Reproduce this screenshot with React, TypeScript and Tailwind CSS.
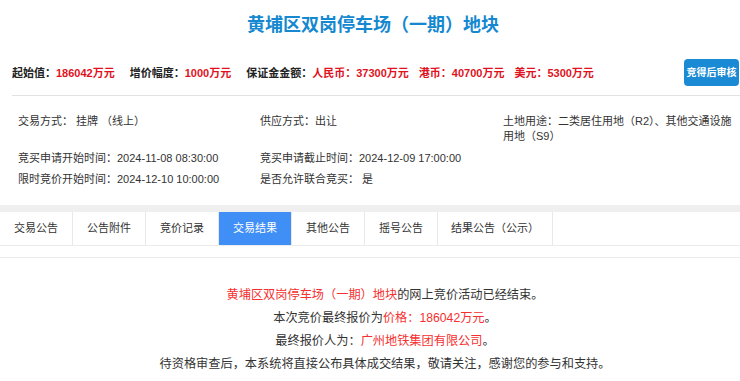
const font = { fontFamily: '"Liberation Sans", "Noto Sans CJK SC", "Noto Sans", sans-serif' };

const tabs = ["交易公告", "公告附件", "竞价记录", "交易结果", "其他公告", "摇号公告", "结果公告（公示）"];

function Field({ label, value }: { label: string; value: string }) {
  return (
    <div className="whitespace-nowrap text-[11px] leading-[14px] text-[#333]">
      {label}
      {value}
    </div>
  );
}

export default function App() {
  return (
    <div className="w-[740px] h-[381px] overflow-hidden bg-white" style={font}>
      <h1 className="pt-[12px] pl-[6px] text-center text-[18px] font-bold leading-[26px] text-[#1588d0]">
        黄埔区双岗停车场（一期）地块
      </h1>

      <div className="mt-[21px] flex items-center justify-between pl-[12px] pr-[1px]">
        <div className="flex items-center gap-[15px] text-[11px] font-bold leading-[16px] text-[#222]">
          <span>
            起始值：<span className="text-[#e0121e]">186042万元</span>
          </span>
          <span>
            增价幅度：<span className="text-[#e0121e]">1000万元</span>
          </span>
          <span className="flex gap-[10px]">
            <span>
              保证金金额：<span className="text-[#e0121e]">人民币：37300万元</span>
            </span>
            <span className="text-[#e0121e]">港币：40700万元</span>
            <span className="text-[#e0121e]">美元：5300万元</span>
          </span>
        </div>
        <button className="h-[27px] w-[55px] rounded-[4px] bg-[#1a8ad4] text-[10px] font-bold text-white">
          竞得后审核
        </button>
      </div>

      <div className="mt-[9px] ml-[12px] border-b border-[#e2e2e2]" />

      <div className="mt-[18px] grid grid-cols-[242px_243px_1fr] gap-y-[7px] pl-[18px]">
        <Field label="交易方式：" value=" 挂牌 （线上）" />
        <Field label="供应方式：" value="出让" />
        <div className="whitespace-nowrap text-[11px] leading-[15px] text-[#333]">
          土地用途：二类居住用地（R2）、其他交通设施
          <br />
          用地（S9）
        </div>
        <Field label="竞买申请开始时间：" value="2024-11-08 08:30:00" />
        <Field label="竞买申请截止时间：" value="2024-12-09 17:00:00" />
        <div />
        <Field label="限时竞价开始时间：" value="2024-12-10 10:00:00" />
        <Field label="是否允许联合竞买：" value=" 是" />
        <div />
      </div>

      <div className="mt-[19px] h-[7px] bg-[#efefef]" />

      <div className="flex h-[34px] border-b border-[#ececec]">
        {tabs.map((t) => (
          <div
            key={t}
            className={
              t === "交易结果"
                ? "flex h-full items-center justify-center border-r border-[#e8e8e8] bg-[#3f8ff6] text-[11px] text-white"
                : "flex h-full items-center justify-center border-r border-[#e8e8e8] text-[11px] text-[#333]"
            }
            style={{ width: t.length > 4 ? 115 : 73 }}
          >
            {t}
          </div>
        ))}
      </div>

      <div className="mt-[11px] border-t border-[#ececec] pt-[26px] pl-[30px] text-center text-[12.2px] leading-[23px] text-[#333]">
        <p>
          <span className="text-[#f5302f]">黄埔区双岗停车场（一期）地块</span>的网上竞价活动已经结束。
        </p>
        <p>
          本次竞价最终报价为<span className="text-[#f5302f]">价格：186042万元</span>。
        </p>
        <p>
          最终报价人为：<span className="text-[#f5302f]">广州地铁集团有限公司</span>。
        </p>
        <p>待资格审查后，本系统将直接公布具体成交结果，敬请关注，感谢您的参与和支持。</p>
      </div>
    </div>
  );
}
